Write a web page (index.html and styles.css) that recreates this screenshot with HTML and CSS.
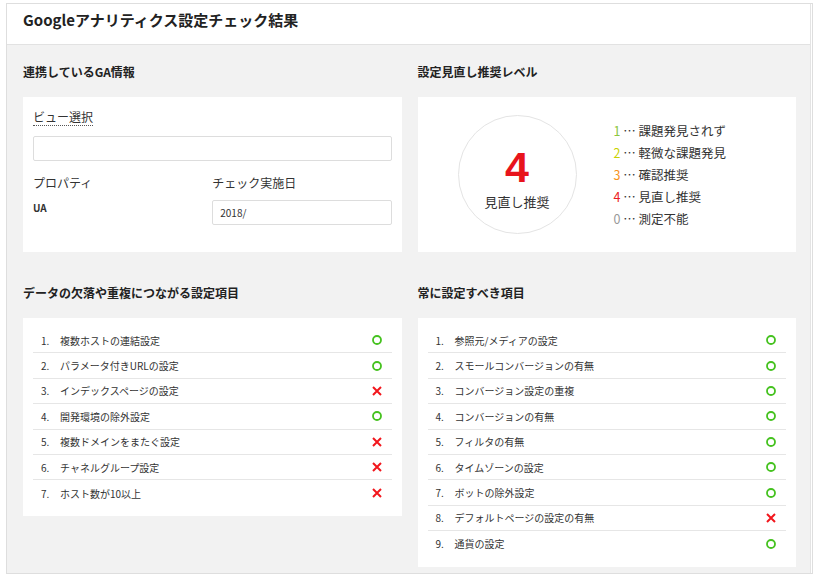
FILE: index.html
```html
<!DOCTYPE html>
<html lang="ja">
<head>
<meta charset="utf-8">
<title>Googleアナリティクス設定チェック結果</title>
<link rel="stylesheet" href="styles.css">
</head>
<body>
<div class="frame">
  <div class="panel">
    <header class="page-head">
      <h1 class="page-title">Googleアナリティクス設定チェック結果</h1>
    </header>
    <main class="board">
      <section class="sec sec-stretch">
        <h2 class="sec-title">連携しているGA情報</h2>
        <div class="card info-card">
          <span class="view-label">ビュー選択</span>
          <div class="field field-wide"></div>
          <div class="info-grid">
            <div class="info-label">プロパティ</div>
            <div class="info-label">チェック実施日</div>
            <div class="info-value">UA</div>
            <div class="field field-date">2018/</div>
          </div>
        </div>
      </section>

      <section class="sec sec-stretch">
        <h2 class="sec-title">設定見直し推奨レベル</h2>
        <div class="card level-card">
          <div class="level-circle">
            <div class="level-num">4</div>
            <div class="level-text">見直し推奨</div>
          </div>
          <ul class="legend">
            <li><span class="lv lv1">1</span> … 課題発見されず</li>
            <li><span class="lv lv2">2</span> … 軽微な課題発見</li>
            <li><span class="lv lv3">3</span> … 確認推奨</li>
            <li><span class="lv lv4">4</span> … 見直し推奨</li>
            <li><span class="lv lv0">0</span> … 測定不能</li>
          </ul>
        </div>
      </section>

      <section class="sec sec-top">
        <h2 class="sec-title">データの欠落や重複につながる設定項目</h2>
        <div class="card list-card">
          <ol class="check-list">
            <li class="row"><span class="num">1.</span><span class="label">複数ホストの連結設定</span><svg class="ico" viewBox="0 0 10 10"><circle cx="5" cy="5" r="4" class="ok"/></svg></li>
            <li class="row"><span class="num">2.</span><span class="label">パラメータ付きURLの設定</span><svg class="ico" viewBox="0 0 10 10"><circle cx="5" cy="5" r="4" class="ok"/></svg></li>
            <li class="row"><span class="num">3.</span><span class="label">インデックスページの設定</span><svg class="ico" viewBox="0 0 10 10"><path d="M1 1L9 9M9 1L1 9" class="ng"/></svg></li>
            <li class="row"><span class="num">4.</span><span class="label">開発環境の除外設定</span><svg class="ico" viewBox="0 0 10 10"><circle cx="5" cy="5" r="4" class="ok"/></svg></li>
            <li class="row"><span class="num">5.</span><span class="label">複数ドメインをまたぐ設定</span><svg class="ico" viewBox="0 0 10 10"><path d="M1 1L9 9M9 1L1 9" class="ng"/></svg></li>
            <li class="row"><span class="num">6.</span><span class="label">チャネルグループ設定</span><svg class="ico" viewBox="0 0 10 10"><path d="M1 1L9 9M9 1L1 9" class="ng"/></svg></li>
            <li class="row"><span class="num">7.</span><span class="label">ホスト数が10以上</span><svg class="ico" viewBox="0 0 10 10"><path d="M1 1L9 9M9 1L1 9" class="ng"/></svg></li>
          </ol>
        </div>
      </section>

      <section class="sec sec-top">
        <h2 class="sec-title">常に設定すべき項目</h2>
        <div class="card list-card">
          <ol class="check-list">
            <li class="row"><span class="num">1.</span><span class="label">参照元/メディアの設定</span><svg class="ico" viewBox="0 0 10 10"><circle cx="5" cy="5" r="4" class="ok"/></svg></li>
            <li class="row"><span class="num">2.</span><span class="label">スモールコンバージョンの有無</span><svg class="ico" viewBox="0 0 10 10"><circle cx="5" cy="5" r="4" class="ok"/></svg></li>
            <li class="row"><span class="num">3.</span><span class="label">コンバージョン設定の重複</span><svg class="ico" viewBox="0 0 10 10"><circle cx="5" cy="5" r="4" class="ok"/></svg></li>
            <li class="row"><span class="num">4.</span><span class="label">コンバージョンの有無</span><svg class="ico" viewBox="0 0 10 10"><circle cx="5" cy="5" r="4" class="ok"/></svg></li>
            <li class="row"><span class="num">5.</span><span class="label">フィルタの有無</span><svg class="ico" viewBox="0 0 10 10"><circle cx="5" cy="5" r="4" class="ok"/></svg></li>
            <li class="row"><span class="num">6.</span><span class="label">タイムゾーンの設定</span><svg class="ico" viewBox="0 0 10 10"><circle cx="5" cy="5" r="4" class="ok"/></svg></li>
            <li class="row"><span class="num">7.</span><span class="label">ボットの除外設定</span><svg class="ico" viewBox="0 0 10 10"><circle cx="5" cy="5" r="4" class="ok"/></svg></li>
            <li class="row"><span class="num">8.</span><span class="label">デフォルトページの設定の有無</span><svg class="ico" viewBox="0 0 10 10"><path d="M1 1L9 9M9 1L1 9" class="ng"/></svg></li>
            <li class="row"><span class="num">9.</span><span class="label">通貨の設定</span><svg class="ico" viewBox="0 0 10 10"><circle cx="5" cy="5" r="4" class="ok"/></svg></li>
          </ol>
        </div>
      </section>
    </main>
  </div>
</div>
</body>
</html>
```

FILE: styles.css
```css
* { box-sizing: border-box; }

body {
  margin: 0;
  background: #ffffff;
  font-family: "Noto Sans CJK JP", "Noto Sans", sans-serif;
  color: #333333;
}

.frame {
  margin: 3px 9px 0 6px;
  border: 1px solid #dedede;
}

.panel {
  margin-right: 1px;
  border-right: 1px solid #e4e4e4;
}

.page-head {
  height: 41px;
  background: #ffffff;
  border-bottom: 1px solid #e2e2e2;
  padding-left: 16px;
}

.page-title {
  margin: 0;
  font-size: 15px;
  line-height: 32px;
  font-weight: 700;
  color: #222222;
}

.board {
  background: #f2f2f2;
  padding: 18px 14px 6px 16px;
  display: grid;
  grid-template-columns: 1fr 1fr;
  column-gap: 16px;
  row-gap: 32px;
}

.sec {
  display: flex;
  flex-direction: column;
}

.sec-stretch .card { flex: 1; }
.sec-top { align-self: start; }

.sec-title {
  margin: 0 0 16px;
  font-size: 12px;
  line-height: 18px;
  font-weight: 700;
  color: #222222;
}

.card {
  background: #ffffff;
}

/* info card */
.info-card {
  display: flex;
  flex-direction: column;
  align-items: stretch;
  padding: 12px 10px 10px;
}

.view-label {
  align-self: flex-start;
  font-size: 12px;
  line-height: 16px;
  border-bottom: 1px dotted #555555;
  color: #333333;
}

.field {
  height: 25px;
  border: 1px solid #dddddd;
  border-radius: 2px;
  background: #ffffff;
  font-size: 10px;
  line-height: 23px;
  padding-left: 7px;
  color: #333333;
}

.field-wide {
  margin-top: 10px;
}

.info-grid {
  margin-top: 13px;
  display: grid;
  grid-template-columns: 1fr 1fr;
  row-gap: 8px;
  align-items: start;
}

.info-label {
  font-size: 12px;
  line-height: 18px;
  color: #333333;
}

.info-value {
  font-size: 10px;
  line-height: 16px;
  font-weight: 700;
  color: #333333;
}

/* level card */
.level-card {
  display: flex;
  align-items: center;
  padding: 18px 0 18px 40px;
}

.level-circle {
  width: 119px;
  height: 119px;
  border: 1px solid #e4e4e4;
  border-radius: 50%;
  display: flex;
  flex-direction: column;
  align-items: center;
  padding-top: 30px;
  flex: none;
}

.level-num {
  font-family: "Liberation Sans", Arial, sans-serif;
  font-size: 43px;
  line-height: 43px;
  font-weight: 700;
  color: #e8141c;
}

.level-text {
  margin-top: 4px;
  font-size: 13px;
  line-height: 18px;
  color: #333333;
}

.legend {
  list-style: none;
  margin: 0 0 0 37px;
  padding: 0;
  font-size: 12.5px;
  line-height: 22px;
  color: #333333;
}

.lv { font-weight: 400; }
.lv1 { color: #8cc63e; }
.lv2 { color: #c9d200; }
.lv3 { color: #f7941d; }
.lv4 { color: #ec1c24; }
.lv0 { color: #999999; }

/* lists */
.list-card {
  padding: 10px;
}

.check-list {
  list-style: none;
  margin: 0;
  padding: 0;
}

.row {
  display: flex;
  align-items: center;
  height: 25.4px;
  padding: 0 10px 0 8px;
  border-bottom: 1px solid #e6e6e6;
  font-size: 10px;
  color: #333333;
}

.row:last-child {
  border-bottom: none;
}

.num {
  width: 19px;
  flex: none;
}

.label {
  flex: 1;
}

.ico {
  width: 10px;
  height: 10px;
  flex: none;
}

.ok {
  fill: none;
  stroke: #45c21f;
  stroke-width: 1.8;
}

.ng {
  fill: none;
  stroke: #f2161c;
  stroke-width: 2;
}
```
